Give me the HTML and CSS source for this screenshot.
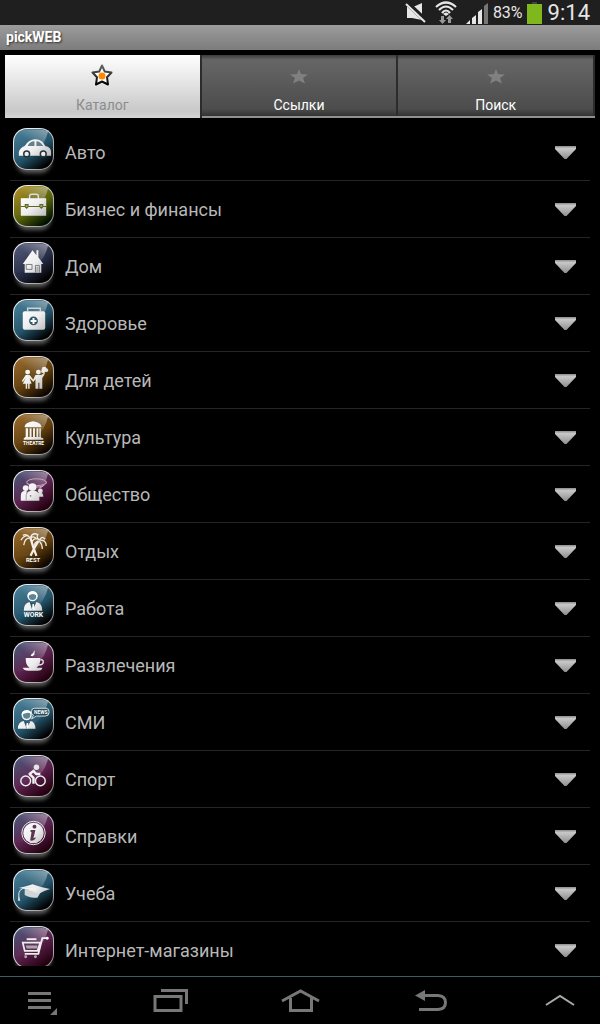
FILE: index.html
```html
<!DOCTYPE html>
<html lang="ru">
<head>
    <meta charset="UTF-8">
    <meta name="viewport" content="width=device-width, initial-scale=1.0">
    <title>pickWEB</title>
    <link rel="stylesheet" href="styles.css">
</head>
<body>
    <!-- shared gradients and gloss -->
    <svg class="defs" width="0" height="0" aria-hidden="true">
        <defs>
            <linearGradient id="silver" gradientUnits="userSpaceOnUse" x1="10" y1="8" x2="34" y2="34">
                <stop offset="0" stop-color="#fff"/>
                <stop offset="0.5" stop-color="#eee"/>
                <stop offset="1" stop-color="#b4b4b4"/>
            </linearGradient>
            <linearGradient id="shine" x1="0" y1="1" x2="1" y2="0">
                <stop offset="0" stop-color="#fff" stop-opacity="0.02"/>
                <stop offset="0.5" stop-color="#fff" stop-opacity="0.05"/>
                <stop offset="1" stop-color="#fff" stop-opacity="0.45"/>
            </linearGradient>
            <linearGradient id="arrow" x1="0" y1="0" x2="0" y2="1">
                <stop offset="0" stop-color="#8c8c8c"/>
                <stop offset="0.2" stop-color="#c8c8c8"/>
                <stop offset="1" stop-color="#8f8f8f"/>
            </linearGradient>
            <linearGradient id="outline" x1="0" y1="0" x2="0" y2="1">
                <stop offset="0" stop-color="#666"/>
                <stop offset="1" stop-color="#000"/>
            </linearGradient>
        </defs>
        <symbol id="gloss" viewBox="0 0 42 42">
            <path d="M2 31Q29 30 36 3Q31 1 26 1H15Q1 1 1 15z" fill="url(#shine)"/>
        </symbol>
        <symbol id="down" viewBox="0 0 22 14">
            <path d="M0 0H21V3L11.500 13H9.500L0 3z" fill="url(#arrow)"/>
        </symbol>
    </svg>

    <header class="status">
        <svg width="22" height="24" viewBox="0 0 22 24" aria-label="Без звука">
            <path d="M2 6h6l9-4v17L7 17H2z" fill="#e6e6e6"/>
            <path d="M1 1L21 20" stroke="#1f1f1f" stroke-width="5"/>
            <path d="M1 3L20 21" stroke="#e6e6e6" stroke-width="2"/>
        </svg>
        <svg class="wifi" width="22" height="24" viewBox="0 0 22 24" aria-label="Wi-Fi">
            <g fill="none" stroke="#e6e6e6" stroke-width="2.200">
                <path d="M1 6Q11-3 21 6M4 9Q11 2 18 9M7 12Q11 7 15 12"/>
            </g>
            <path d="M8 13Q11 10 14 13L11 15z" fill="#e6e6e6"/>
            <path d="M6 15h3v4h2l-3.500 4L4 19h2zM13 22h3v-4h2l-3.500-4L11 18h2z" fill="#999"/>
        </svg>
        <svg width="24" height="24" viewBox="0 0 24 24" aria-label="Сигнал">
            <path d="M1 23L5 19V23zM7 17L11 14V23H7zM13 11L17 8V23H13z" fill="#e6e6e6"/>
            <path d="M19 5L23 2V23H19z" fill="#777"/>
        </svg>
        <span class="percent">83%</span>
        <svg width="15" height="24" viewBox="0 0 15 24" aria-label="Батарея">
            <path d="M5 1H10V3H5z" fill="#444"/>
            <path d="M0 3H15V23H0z" fill="#7fb81c"/>
        </svg>
        <time class="clock">9:14</time>
    </header>

    <h1 class="title">pickWEB</h1>

    <nav class="tabs">
        <button class="tab active">
            <svg width="24" height="24" viewBox="0 0 24 24">
                <path d="M12 2.500L14.800 8.600L21.500 9.500L17 14.200L18 21.500L12 18.500L6 21.500L7 14.200L2.500 9.500L9.200 8.600z" fill="#fff" stroke="url(#outline)" stroke-width="2" stroke-linejoin="round"/>
                <circle cx="12" cy="13" r="3.500" fill="#ff8a00"/>
            </svg>
            <span>Каталог</span>
        </button>
        <button class="tab">
            <svg width="24" height="24" viewBox="0 0 24 24">
                <path d="M12 6L14 11L21 11.500L16 15L18 20.500L12 17.500L6 20.500L8 15L3 11.500L10 11z" fill="#808080"/>
            </svg>
            <span>Ссылки</span>
        </button>
        <button class="tab">
            <svg width="24" height="24" viewBox="0 0 24 24">
                <path d="M12 6L14 11L21 11.500L16 15L18 20.500L12 17.500L6 20.500L8 15L3 11.500L10 11z" fill="#808080"/>
            </svg>
            <span>Поиск</span>
        </button>
    </nav>

    <main class="list">
        <button class="row">
            <span class="tile blue"><svg viewBox="0 0 42 42">
                <use href="#gloss"/>
                <path d="M6 28V24Q7 20 12 18Q16 11 23 11Q30 11 33 18Q39 19 39 24V28z" fill="url(#silver)"/>
                <path d="M15 18Q17 13 22 13V18zM24 13Q28 13 31 18H24z" fill="#667f8b"/>
                <g fill="#eee" stroke="#24343c" stroke-width="1.500"><circle cx="14" cy="26" r="3"/><circle cx="31" cy="26" r="3"/></g>
            </svg></span>
            <span class="name">Авто</span>
            <svg class="arrow" width="22" height="14"><use href="#down"/></svg>
        </button>
        <button class="row">
            <span class="tile olive"><svg viewBox="0 0 42 42">
                <use href="#gloss"/>
                <path d="M17 14V11Q17 9 19 9H24Q26 9 26 11V14" fill="none" stroke="#ddd" stroke-width="1.500"/>
                <path d="M8 13H34V31H8z" fill="url(#silver)"/>
                <path d="M8 21.500H34" stroke="#5f6417"/>
                <path d="M12 19H16V22L14 24L12 22zM27 19H31V22L29 24L27 22z" fill="#5f6417"/>
                <path d="M13 21h2M28 21h2" stroke="#ddd"/>
            </svg></span>
            <span class="name">Бизнес и финансы</span>
            <svg class="arrow" width="22" height="14"><use href="#down"/></svg>
        </button>
        <button class="row">
            <span class="tile navy"><svg viewBox="0 0 42 42">
                <use href="#gloss"/>
                <path d="M20 8L24 13V8H26V15L31 22H29V31H12V22H10z" fill="url(#silver)"/>
                <path d="M13.500 22.500H19.500V27.500H13.500zM23 31V23.500H27V31" fill="none" stroke="#777a85"/>
                <path d="M24 25H26V31H24z" fill="#aaa"/>
            </svg></span>
            <span class="name">Дом</span>
            <svg class="arrow" width="22" height="14"><use href="#down"/></svg>
        </button>
        <button class="row">
            <span class="tile blue"><svg viewBox="0 0 42 42">
                <use href="#gloss"/>
                <path d="M15 12V9H28V12" fill="none" stroke="#c5d3da" stroke-width="1.500"/>
                <rect x="10" y="12" width="23" height="19" rx="2" fill="url(#silver)"/>
                <circle cx="21" cy="22" r="4.500" fill="#31596b"/>
                <path d="M21 19V25M18 22H24" stroke="#fff" stroke-width="2"/>
            </svg></span>
            <span class="name">Здоровье</span>
            <svg class="arrow" width="22" height="14"><use href="#down"/></svg>
        </button>
        <button class="row">
            <span class="tile brown"><svg viewBox="0 0 42 42">
                <use href="#gloss"/>
                <g fill="url(#silver)">
                    <circle cx="15" cy="16" r="2.500"/><circle cx="26" cy="16" r="2.500"/>
                    <path d="M13 19H17L21 24L20 25L17 22L19 28H17V33H15.500V28H14.500V33H13V28H10L13 22L10 26L9 25z"/>
                    <path d="M23 19H29L33 16L32 19L30 22V33H27V27H26V33H23V23L21 26L20 25z"/>
                    <circle cx="32" cy="13" r="2.500"/><circle cx="34" cy="14" r="2"/><circle cx="31" cy="15" r="2"/>
                </g>
            </svg></span>
            <span class="name">Для детей</span>
            <svg class="arrow" width="22" height="14"><use href="#down"/></svg>
        </button>
        <button class="row">
            <span class="tile brown"><svg viewBox="0 0 42 42">
                <use href="#gloss"/>
                <path d="M12 13Q13 9 20.500 8Q28 9 29 13V14H12zM13 15H15.500V24H13zM17 15H19V24H17zM20.500 15H22.500V24H20.500zM24 15H26V24H24zM27 15H28.500V24H27zM12 24H29V25H31V27H11V25H12z" fill="url(#silver)"/>
                <text x="21" y="32" font-size="5">THEATRE</text>
            </svg></span>
            <span class="name">Культура</span>
            <svg class="arrow" width="22" height="14"><use href="#down"/></svg>
        </button>
        <button class="row">
            <span class="tile purple"><svg viewBox="0 0 42 42">
                <use href="#gloss"/>
                <g fill="none" stroke="#c9a9bd"><ellipse cx="24" cy="12" rx="10" ry="3.500"/><path d="M14 13Q23 20 32 15Q35 13 34 11M27 18L31 16"/></g>
                <g fill="url(#silver)">
                    <circle cx="13" cy="18" r="3"/><circle cx="28" cy="21" r="2.500"/><circle cx="20" cy="17" r="4"/>
                    <path d="M8 31V26Q8 21 12 21H14V31zM25 23H29Q31 23 31 27H26z"/>
                    <path d="M13 31V25Q14 21 18 21H23Q27 22 27 27V31z"/>
                </g>
                <path d="M13.500 31V25Q14 22 17 21" fill="none" stroke="#775b70" stroke-width=".6"/>
                <circle cx="18" cy="26" r=".8" fill="#8b6980"/>
            </svg></span>
            <span class="name">Общество</span>
            <svg class="arrow" width="22" height="14"><use href="#down"/></svg>
        </button>
        <button class="row">
            <span class="tile brown"><svg viewBox="0 0 42 42">
                <use href="#gloss"/>
                <g fill="none" stroke="#f3f0ea" stroke-width="1.300">
                    <path d="M18 11Q13 5 8 13M18 11Q12 10 11 18M17 10Q14 6 10 8M18 10Q20 5 25 7M18 11Q22 8 24 12M27 13Q23 9 19 15M27 13Q29 8 33 12M27 13Q34 12 34 19M27 14Q30 17 30 22M26 14Q22 15 21 20M27 13Q23 9 26 7"/>
                    <path d="M18 11Q20 19 24 29M26 14Q22 20 18 29" stroke-width="2.300"/>
                </g>
                <text x="20.500" y="35" font-size="6">REST</text>
            </svg></span>
            <span class="name">Отдых</span>
            <svg class="arrow" width="22" height="14"><use href="#down"/></svg>
        </button>
        <button class="row">
            <span class="tile blue"><svg viewBox="0 0 42 42">
                <use href="#gloss"/>
                <circle cx="20" cy="12" r="4.500" fill="#5f8496" stroke="#f2f2f2" stroke-width="1.500"/>
                <path d="M15 13V10Q16 7 21 7Q26 8 25 13Q23 9 19 10Q17 10 15 13z" fill="#fff"/>
                <path d="M11 27Q11 19 17 18L20 22L24 18Q30 19 30 27z" fill="url(#silver)"/>
                <path d="M17 18L20 27L24 18L21 20z" fill="#2c5669"/><path d="M20 20L21.500 20L22 25L20.500 27L19.500 25z" fill="#fff"/>
                <text x="21" y="33" font-size="7">WORK</text>
            </svg></span>
            <span class="name">Работа</span>
            <svg class="arrow" width="22" height="14"><use href="#down"/></svg>
        </button>
        <button class="row">
            <span class="tile purple"><svg viewBox="0 0 42 42">
                <use href="#gloss"/>
                <path d="M13 17H28Q28 25 24 27H30Q30 30 25 30H16Q11 30 10 27H17Q13 25 13 17z" fill="url(#silver)"/>
                <path d="M28 19Q31 18 31 21Q31 24 26 24" fill="none" stroke="#ddd" stroke-width="1.500"/>
                <path d="M22 9Q21 12 19 13Q17 15 20 15Q23 13 22 12Q20 13 19.500 14Q23 12 22 9z" fill="#fff"/>
            </svg></span>
            <span class="name">Развлечения</span>
            <svg class="arrow" width="22" height="14"><use href="#down"/></svg>
        </button>
        <button class="row">
            <span class="tile blue"><svg viewBox="0 0 42 42">
                <use href="#gloss"/>
                <path d="M22 10H34Q37 10 37 14Q37 18 33 18H24L19 21L21 17Q18 16 19 13Q19 10 22 10z" fill="#294e5e" stroke="#d7e0e4"/>
                <circle cx="14" cy="17" r="4.500" fill="#5f8496" stroke="#f2f2f2" stroke-width="1.500"/>
                <path d="M9 17V15Q10 12 14 12Q19 12 19 16Q16 14 13 15Q11 15 9 17z" fill="#fff"/>
                <path d="M5 31Q5 24 11 23L14 26L18 23Q23 24 23 31z" fill="url(#silver)"/>
                <path d="M11 23L14 31L18 23L15 25z" fill="#2c5669"/><path d="M14 25H15.500L16 29L14.500 31L13.500 29z" fill="#fff"/>
                <text x="28.500" y="16" font-size="5">NEWS</text>
            </svg></span>
            <span class="name">СМИ</span>
            <svg class="arrow" width="22" height="14"><use href="#down"/></svg>
        </button>
        <button class="row">
            <span class="tile purple"><svg viewBox="0 0 42 42">
                <use href="#gloss"/>
                <g fill="none" stroke="#eee" stroke-width="1.500"><circle cx="13" cy="26" r="5"/><circle cx="28" cy="26" r="5"/></g>
                <circle cx="24" cy="12" r="2.800" fill="#e6e6e6"/>
                <path d="M22 15L17 19L21 23V29M21 16L24 19H28" fill="none" stroke="#f2f2f2" stroke-width="2.500" stroke-linejoin="round"/>
            </svg></span>
            <span class="name">Спорт</span>
            <svg class="arrow" width="22" height="14"><use href="#down"/></svg>
        </button>
        <button class="row">
            <span class="tile purple"><svg viewBox="0 0 42 42">
                <use href="#gloss"/>
                <circle cx="21" cy="21" r="12" fill="none" stroke="#e6e6e6"/>
                <circle cx="21" cy="21" r="10.500" fill="url(#silver)"/>
                <circle cx="22" cy="14.500" r="2" fill="#5b3553"/>
                <path d="M18 18H23L21 26Q21 27 23 25L23 27Q21 29 19 29Q17 29 18 26L19 20H18z" fill="#5b3553"/>
            </svg></span>
            <span class="name">Справки</span>
            <svg class="arrow" width="22" height="14"><use href="#down"/></svg>
        </button>
        <button class="row">
            <span class="tile blue"><svg viewBox="0 0 42 42">
                <use href="#gloss"/>
                <path d="M12 20V26Q17 29 25 29L29 22z" fill="#d2d5d6"/>
                <path d="M6 19Q14 17 20 15Q28 18 38 20Q31 22 26 25Q17 20 6 19z" fill="url(#silver)"/>
                <path d="M20 18Q7 18 6 24V31" fill="none" stroke="#e6e6e6"/>
                <path d="M6 27L5 32H7.500z" fill="#ddd"/>
            </svg></span>
            <span class="name">Учеба</span>
            <svg class="arrow" width="22" height="14"><use href="#down"/></svg>
        </button>
        <button class="row">
            <span class="tile purple"><svg viewBox="0 0 42 42">
                <use href="#gloss"/>
                <path d="M10 16.500H28L25 25H12zM36 12H30L26 28H12" fill="none" stroke="#eee" stroke-width="1.800"/>
                <path d="M13 19.500H25V22.500H14z" fill="#aaa"/>
                <path d="M14 12H24V14H14z" fill="#eee"/>
                <circle cx="35" cy="12" r="1.500" fill="#fff"/>
                <circle cx="13" cy="31" r="1.500" fill="#aaa"/><circle cx="23" cy="31" r="1.500" fill="#aaa"/>
            </svg></span>
            <span class="name">Интернет-магазины</span>
            <svg class="arrow" width="22" height="14"><use href="#down"/></svg>
        </button>
    </main>

    <footer class="navbar">
        <button aria-label="Меню">
            <svg width="40" height="26" viewBox="0 0 40 26">
                <path d="M6 4H29V7H6zM6 11H29V14H6zM6 18H29V21H6zM35 20V27H28z" fill="#777"/>
            </svg>
        </button>
        <button aria-label="Недавние">
            <svg width="40" height="26" viewBox="0 0 40 26">
                <path d="M9 2.500H34.500V16M3 8.500H29V22.500H3z" fill="none" stroke="#777" stroke-width="3"/>
            </svg>
        </button>
        <button aria-label="Домой">
            <svg width="40" height="26" viewBox="0 0 40 26">
                <path d="M1 13L19.500 3L38 13M9.500 10V22.500H30.500V10" fill="none" stroke="#777" stroke-width="3"/>
            </svg>
        </button>
        <button aria-label="Назад">
            <svg width="40" height="26" viewBox="0 0 40 26">
                <path d="M12 7.500H27Q34.500 8 34.500 14.500Q34.500 21 27 21.500H8" fill="none" stroke="#777" stroke-width="3"/>
                <path d="M4 7.500L14 2V13z" fill="#777"/>
            </svg>
        </button>
        <button aria-label="Вверх">
            <svg width="40" height="26" viewBox="0 0 40 26">
                <path d="M6 17L20 8L34 17" fill="none" stroke="#aaa" stroke-width="2"/>
            </svg>
        </button>
    </footer>
</body>
</html>
```
FILE: styles.css
```css
* {
    margin: 0;
    padding: 0;
    box-sizing: border-box;
    font-family: Roboto, 'Noto Sans', sans-serif;
}

body {
    background: #000;
    height: 100vh;
    display: flex;
    flex-direction: column;
    overflow: hidden;
}

button {
    border: none;
    background: none;
    color: inherit;
    cursor: pointer;
}

.defs {
    position: absolute;
}

/* Status bar */
.status {
    display: flex;
    justify-content: flex-end;
    align-items: center;
    height: 25px;
    flex-shrink: 0;
    padding-right: 10px;
    background: #1f1f1f;
    color: #e6e6e6;
}

.wifi {
    margin: 0 8px;
}

.percent {
    font-size: 16px;
    margin: 0 4px 0 4px;
}

.clock {
    font-size: 22px;
    line-height: 24px;
    margin-left: 6px;
}

.title {
    height: 25px;
    flex-shrink: 0;
    padding-left: 6px;
    background: linear-gradient(#9c9c9c, #7c7c7c);
    color: #fff;
    font-size: 14px;
    line-height: 24px;
    text-shadow: 1px 1px 2px #333;
}

/* Tabs */
.tabs {
    display: flex;
    flex-shrink: 0;
    margin: 5px 5px 6px;
    border-bottom: 2px solid #909090;
}

.tab {
    flex: 1;
    display: flex;
    flex-direction: column;
    align-items: center;
    gap: 10px;
    padding: 8px 0 2px;
    background: linear-gradient(#3c3c3c 0, #666 5px, #4c4c4c 54px, #333 100%);
    border-right: 2px solid #2c2c2c;
    color: #fff;
    font-size: 14px;
    line-height: 17px;
}

.tab.active {
    background: linear-gradient(#fff, #c8c8c8 90%, #d4d4d4);
    margin-bottom: -2px;
    color: #8c8c8c;
}

/* Catalog */
.list {
    flex: 1;
    min-height: 0;
    overflow: hidden;
    margin-bottom: 10px;
    padding: 0 10px;
}

.row {
    display: flex;
    align-items: flex-start;
    width: 100%;
    height: 57px;
    padding: 4px 13px 0 3px;
    border-bottom: 1px solid #252525;
    text-align: left;
}

.tile {
    width: 41px;
    height: 42px;
    border: 1px solid transparent;
    border-radius: 14px;
    box-shadow: 0 6px 4px -3px rgba(190, 190, 190, 0.5);
}

.tile svg {
    display: block;
    width: 41px;
    height: 42px;
    margin: -1px;
}

.tile text {
    fill: #fff;
    font-weight: bold;
    text-anchor: middle;
}

.blue {
    background: linear-gradient(145deg, #3f7b96, #235369 55%, #000 88%) padding-box,
        linear-gradient(135deg, #fff, #ccc 55%, #888) border-box;
}

.olive {
    background: linear-gradient(145deg, #b08a18, #56610a 55%, #001000 88%) padding-box,
        linear-gradient(135deg, #fff, #ccc 55%, #888) border-box;
}

.navy {
    background: linear-gradient(145deg, #4a5374, #262b45 55%, #000 88%) padding-box,
        linear-gradient(135deg, #fff, #ccc 55%, #888) border-box;
}

.brown {
    background: linear-gradient(145deg, #966420, #5f3d0c 55%, #0c0500 88%) padding-box,
        linear-gradient(135deg, #fff, #ccc 55%, #888) border-box;
}

.purple {
    background: linear-gradient(145deg, #3c5274, #5c2350 50%, #25000f 88%) padding-box,
        linear-gradient(135deg, #fff, #ccc 55%, #888) border-box;
}

.name {
    flex: 1;
    margin-left: 11px;
    padding-top: 14px;
    color: #b8b8b8;
    font-size: 18px;
    line-height: 22px;
}

.arrow {
    margin-top: 18px;
}

/* Navigation bar */
.navbar {
    display: flex;
    justify-content: space-between;
    align-items: center;
    height: 48px;
    flex-shrink: 0;
    padding: 0 20px 0 22px;
    border-top: 1px solid #3f5c69;
}

.navbar svg {
    display: block;
    overflow: visible;
}
```
